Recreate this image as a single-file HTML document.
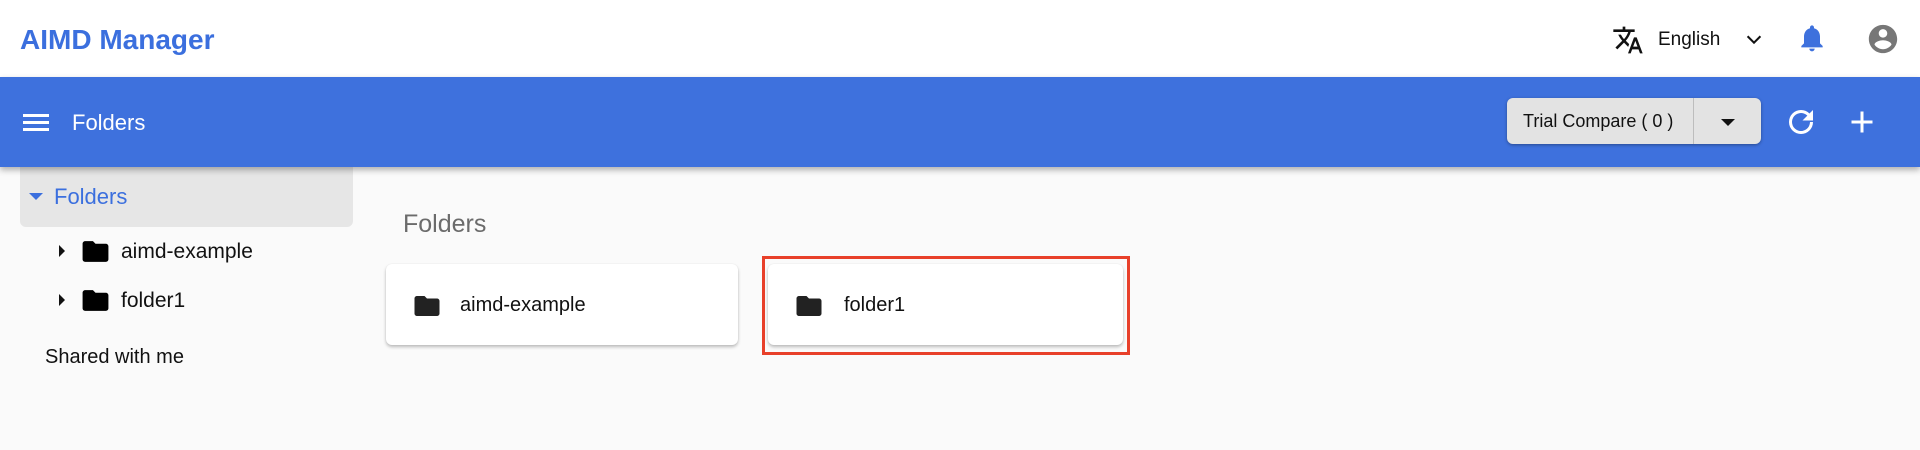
<!DOCTYPE html>
<html><head><meta charset="utf-8"><style>
*{margin:0;padding:0;box-sizing:border-box}
body{width:1920px;height:450px;overflow:hidden;background:#fafafa;font-family:"Liberation Sans",Arial,sans-serif;position:relative}
.abs{position:absolute}
.hdr{left:0;top:0;width:1920px;height:77px;background:#fff}
.bar{left:0;top:77px;width:1920px;height:90px;background:#3e71dd;box-shadow:0 3px 6px rgba(0,0,0,.3);z-index:2}
.t{white-space:nowrap;line-height:1}
.card{background:#fff;border-radius:6px;box-shadow:0 2px 3px rgba(0,0,0,.25),0 0 1px rgba(0,0,0,.1)}
</style></head><body>
<div class="abs hdr"></div>
<div class="abs t" style="left:20px;top:26px;font-size:28px;font-weight:bold;color:#3b6fde">AIMD Manager</div>
<svg class="abs" style="left:1612px;top:24px" width="32" height="32" viewBox="0 0 24 24"><path fill="#111" d="M12.87 15.07l-2.54-2.51.03-.03A17.5 17.5 0 0014.07 6H17V4h-7V2H8v2H1v2h11.17C11.5 7.92 10.44 9.75 9 11.35 8.07 10.32 7.3 9.19 6.69 8h-2c.73 1.63 1.73 3.17 2.98 4.56l-5.09 5.02L4 19l5-5 3.11 3.11.76-2.04zM18.5 10h-2L12 22h2l1.12-3h4.75L21 22h2l-4.5-12zm-2.62 7l1.62-4.33L19.12 17h-3.24z"/></svg>
<div class="abs t" style="left:1658px;top:30px;font-size:19px;color:#111">English</div>
<svg class="abs" style="left:1743px;top:28px" width="22" height="22" viewBox="0 0 24 24"><path fill="none" stroke="#111" stroke-width="2.2" d="M5 9l7 7 7-7"/></svg>
<svg class="abs" style="left:1796px;top:22px" width="32" height="32" viewBox="0 0 24 24"><path fill="#3e71dd" d="M12 22c1.1 0 2-.9 2-2h-4c0 1.1.89 2 2 2zm6-6v-5c0-3.07-1.64-5.64-4.5-6.32V4c0-.83-.67-1.5-1.5-1.5s-1.5.67-1.5 1.5v.68C7.63 5.36 6 7.92 6 11v5l-2 2v1h16v-1l-2-2z"/></svg>
<svg class="abs" style="left:1866px;top:22px" width="34" height="34" viewBox="0 0 24 24"><path fill="#777" d="M12 2C6.48 2 2 6.48 2 12s4.48 10 10 10 10-4.48 10-10S17.52 2 12 2zm0 3c1.66 0 3 1.34 3 3s-1.34 3-3 3-3-1.34-3-3 1.34-3 3-3zm0 14.2c-2.5 0-4.71-1.28-6-3.22.03-1.99 4-3.08 6-3.08 1.99 0 5.97 1.09 6 3.08-1.29 1.94-3.5 3.22-6 3.22z"/></svg>

<div class="abs bar">
  <div class="abs" style="left:23px;top:37px;width:26px;height:3px;background:#fff"></div>
  <div class="abs" style="left:23px;top:44px;width:26px;height:3px;background:#fff"></div>
  <div class="abs" style="left:23px;top:51px;width:26px;height:3px;background:#fff"></div>
  <div class="abs t" style="left:72px;top:35px;font-size:22px;color:#fff">Folders</div>
  <div class="abs" style="left:1507px;top:21px;width:254px;height:46px;background:#e3e3e3;border-radius:6px;box-shadow:0 1px 3px rgba(0,0,0,.35)"></div>
  <div class="abs" style="left:1693px;top:21px;width:1px;height:46px;background:#bdbdbd"></div>
  <div class="abs t" style="left:1523px;top:35px;font-size:18px;color:#111">Trial Compare ( 0 )</div>
  <div class="abs" style="left:1721px;top:42px;width:0;height:0;border-left:7px solid transparent;border-right:7px solid transparent;border-top:7px solid #111"></div>
  <svg class="abs" style="left:1783px;top:27px" width="36" height="36" viewBox="0 0 24 24"><path fill="#fff" d="M17.65 6.35A7.96 7.96 0 0012 4a8 8 0 108 8h-2a6 6 0 11-1.76-4.24L13 11h7V4l-2.35 2.35z"/></svg>
  <svg class="abs" style="left:1844px;top:27px" width="36" height="36" viewBox="0 0 24 24"><path fill="#fff" d="M19 13h-6v6h-2v-6H5v-2h6V5h2v6h6v2z"/></svg>
</div>

<div class="abs" style="left:20px;top:167px;width:333px;height:60px;background:#e6e6e6;border-radius:0 0 6px 6px"></div>
<div class="abs" style="left:29px;top:193px;width:0;height:0;border-left:7px solid transparent;border-right:7px solid transparent;border-top:7px solid #3b6fde"></div>
<div class="abs t" style="left:54px;top:186px;font-size:22px;color:#3b6fde">Folders</div>

<div class="abs" style="left:59px;top:245px;width:0;height:0;border-top:6px solid transparent;border-bottom:6px solid transparent;border-left:6px solid #111"></div>
<svg class="abs" style="left:80px;top:236px" width="31" height="31" viewBox="0 0 24 24"><path fill="#000" d="M10 4H4c-1.1 0-2 .9-2 2v12c0 1.1.9 2 2 2h16c1.1 0 2-.9 2-2V8c0-1.1-.9-2-2-2h-8l-2-2z"/></svg>
<div class="abs t" style="left:121px;top:241px;font-size:21px;color:#111">aimd-example</div>
<div class="abs" style="left:59px;top:294px;width:0;height:0;border-top:6px solid transparent;border-bottom:6px solid transparent;border-left:6px solid #111"></div>
<svg class="abs" style="left:80px;top:285px" width="31" height="31" viewBox="0 0 24 24"><path fill="#000" d="M10 4H4c-1.1 0-2 .9-2 2v12c0 1.1.9 2 2 2h16c1.1 0 2-.9 2-2V8c0-1.1-.9-2-2-2h-8l-2-2z"/></svg>
<div class="abs t" style="left:121px;top:290px;font-size:21px;color:#111">folder1</div>
<div class="abs t" style="left:45px;top:347px;font-size:20px;color:#111">Shared with me</div>

<div class="abs t" style="left:403px;top:212px;font-size:25px;color:#6b6b6b">Folders</div>
<div class="abs card" style="left:386px;top:264px;width:352px;height:81px"></div>
<svg class="abs" style="left:412px;top:291px" width="30" height="30" viewBox="0 0 24 24"><path fill="#222" d="M10 4H4c-1.1 0-2 .9-2 2v12c0 1.1.9 2 2 2h16c1.1 0 2-.9 2-2V8c0-1.1-.9-2-2-2h-8l-2-2z"/></svg>
<div class="abs t" style="left:460px;top:295px;font-size:20px;color:#111">aimd-example</div>
<div class="abs card" style="left:768px;top:264px;width:355px;height:81px"></div>
<svg class="abs" style="left:794px;top:291px" width="30" height="30" viewBox="0 0 24 24"><path fill="#222" d="M10 4H4c-1.1 0-2 .9-2 2v12c0 1.1.9 2 2 2h16c1.1 0 2-.9 2-2V8c0-1.1-.9-2-2-2h-8l-2-2z"/></svg>
<div class="abs t" style="left:844px;top:295px;font-size:20px;color:#111">folder1</div>
<div class="abs" style="left:762px;top:256px;width:368px;height:99px;border:3px solid #e8402a"></div>
</body></html>
